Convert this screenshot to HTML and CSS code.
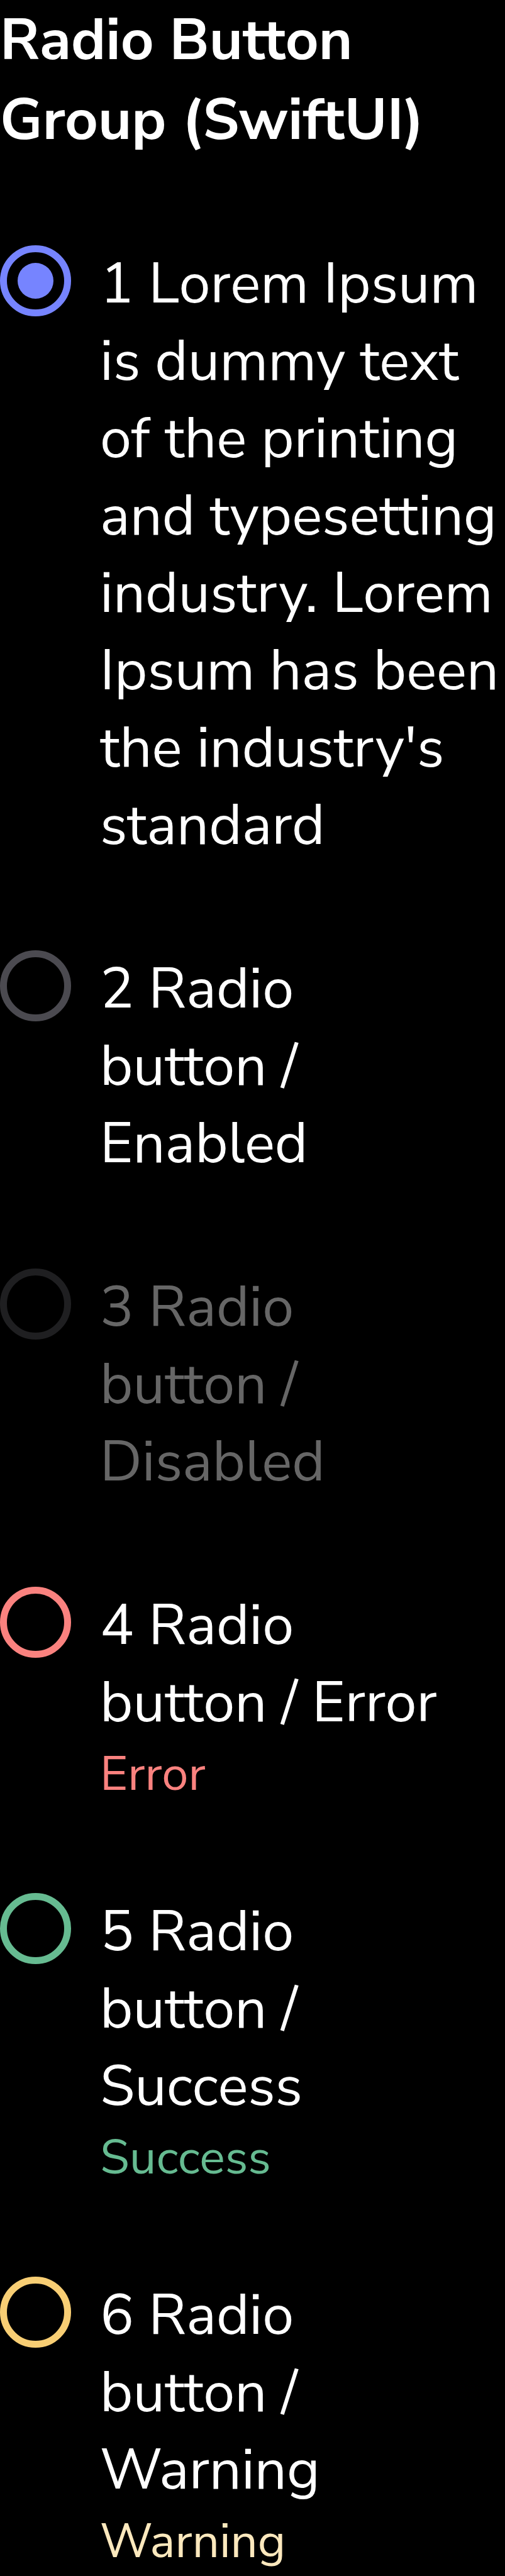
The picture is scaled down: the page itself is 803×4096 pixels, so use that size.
FILE: index.html
```html
<!DOCTYPE html>
<html lang="en">
<head>
<meta charset="utf-8">
<meta name="viewport" content="width=device-width, initial-scale=1">
<title>Radio Button Group (SwiftUI)</title>
<link rel="stylesheet" href="styles.css">
</head>
<body>
<main class="page">
  <h1 class="title" id="group-title">Radio Button<br>Group (SwiftUI)</h1>
  <div class="group" role="radiogroup" aria-labelledby="group-title">
    <div class="option">
      <input class="radio" type="radio" name="option" id="option-1" checked>
      <div class="text">
        <label class="label" for="option-1">1 Lorem Ipsum<br>is dummy text<br>of the printing<br>and typesetting<br>industry. Lorem<br>Ipsum has been<br>the industry's<br>standard</label>
      </div>
    </div>
    <div class="option">
      <input class="radio" type="radio" name="option" id="option-2">
      <div class="text">
        <label class="label" for="option-2">2 Radio<br>button /<br>Enabled</label>
      </div>
    </div>
    <div class="option option-disabled">
      <input class="radio" type="radio" name="option" id="option-3" disabled>
      <div class="text">
        <label class="label" for="option-3">3 Radio<br>button /<br>Disabled</label>
      </div>
    </div>
    <div class="option option-error">
      <input class="radio" type="radio" name="option" id="option-4" aria-describedby="helper-4">
      <div class="text">
        <label class="label" for="option-4">4 Radio<br>button / Error</label>
        <p class="helper" id="helper-4">Error</p>
      </div>
    </div>
    <div class="option option-success">
      <input class="radio" type="radio" name="option" id="option-5" aria-describedby="helper-5">
      <div class="text">
        <label class="label" for="option-5">5 Radio<br>button /<br>Success</label>
        <p class="helper" id="helper-5">Success</p>
      </div>
    </div>
    <div class="option option-warning">
      <input class="radio" type="radio" name="option" id="option-6" aria-describedby="helper-6">
      <div class="text">
        <label class="label" for="option-6">6 Radio<br>button /<br>Warning</label>
        <p class="helper" id="helper-6">Warning</p>
      </div>
    </div>
  </div>
</main>
</body>
</html>
```

FILE: styles.css
```css
* {
  box-sizing: border-box;
}

body {
  margin: 0;
  background: #000;
  color: #fff;
  font-family: "Nunito Sans", "Open Sans", "Noto Sans", sans-serif;
}

.page {
  display: flex;
  flex-direction: column;
  gap: 136px;
}

.title {
  margin: 0;
  font-size: 92px;
  font-weight: 700;
  line-height: 127px;
}

.group {
  display: flex;
  flex-direction: column;
  gap: 137px;
}

.option {
  --ring: #4b4a50;
  --helper: #fff;
  display: flex;
  align-items: flex-start;
  gap: 46px;
}

.radio {
  appearance: none;
  display: grid;
  place-items: center;
  flex: none;
  width: 113px;
  height: 113px;
  margin: 0;
  border: 11px solid var(--ring);
  border-radius: 50%;
}

.radio:checked {
  border-color: #7684ff;
}

.radio:checked::before {
  content: "";
  width: 57px;
  height: 57px;
  border-radius: 50%;
  background: #7684ff;
}

.text {
  flex: 1;
  min-width: 0;
}

.label {
  display: block;
  font-size: 90px;
  line-height: 123px;
}

.helper {
  margin: 0;
  color: var(--helper);
  font-size: 76px;
  line-height: 104px;
}

.option-disabled {
  --ring: #1f1f21;
  color: #666;
}

.option-error {
  --ring: #fa827f;
  --helper: #fa827f;
}

.option-success {
  --ring: #66bb91;
  --helper: #66bb91;
}

.option-warning {
  --ring: #f8ce74;
  --helper: #fbe8bd;
}
```
